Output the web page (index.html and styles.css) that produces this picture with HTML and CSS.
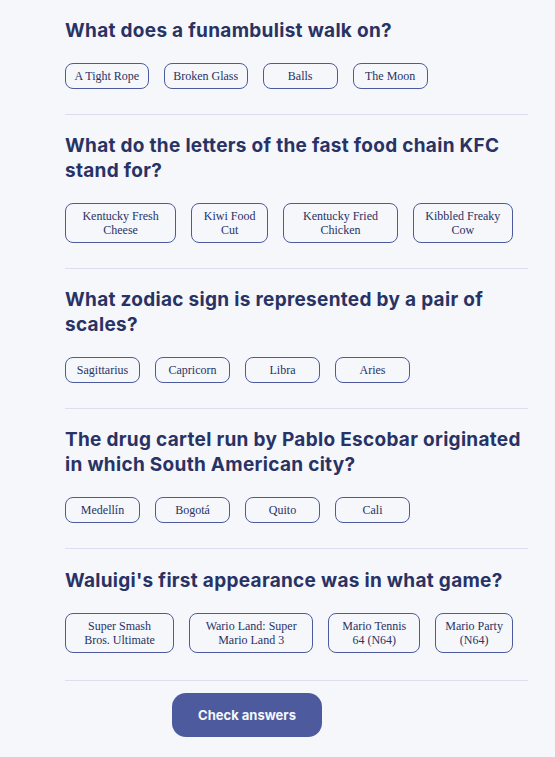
FILE: index.html
```html
<!DOCTYPE html>
<html lang="en">
<head>
<meta charset="utf-8">
<title>Quiz</title>
<link rel="stylesheet" href="styles.css">
</head>
<body>
<main class="quiz">
  <section class="question">
    <h2 class="question-title">What does a funambulist walk on?</h2>
    <div class="options">
      <button class="option">A Tight Rope</button>
      <button class="option">Broken Glass</button>
      <button class="option">Balls</button>
      <button class="option">The Moon</button>
    </div>
  </section>
  <section class="question">
    <h2 class="question-title">What do the letters of the fast food chain KFC stand for?</h2>
    <div class="options">
      <button class="option">Kentucky Fresh Cheese</button>
      <button class="option">Kiwi Food Cut</button>
      <button class="option">Kentucky Fried Chicken</button>
      <button class="option">Kibbled Freaky Cow</button>
    </div>
  </section>
  <section class="question">
    <h2 class="question-title">What zodiac sign is represented by a pair of scales?</h2>
    <div class="options">
      <button class="option">Sagittarius</button>
      <button class="option">Capricorn</button>
      <button class="option">Libra</button>
      <button class="option">Aries</button>
    </div>
  </section>
  <section class="question">
    <h2 class="question-title">The drug cartel run by Pablo Escobar originated in which South American city?</h2>
    <div class="options">
      <button class="option">Medellín</button>
      <button class="option">Bogotá</button>
      <button class="option">Quito</button>
      <button class="option">Cali</button>
    </div>
  </section>
  <section class="question">
    <h2 class="question-title">Waluigi's first appearance was in what game?</h2>
    <div class="options">
      <button class="option">Super Smash Bros. Ultimate</button>
      <button class="option">Wario Land: Super Mario Land 3</button>
      <button class="option">Mario Tennis 64 (N64)</button>
      <button class="option">Mario Party (N64)</button>
    </div>
  </section>
  <div class="actions">
    <button class="check-btn">Check answers</button>
  </div>
</main>
</body>
</html>
```

FILE: styles.css
```css
html, body {
  margin: 0;
  padding: 0;
  background: #f5f7fb;
}

body {
  color: #293264;
  font-family: Inter, "Noto Sans", sans-serif;
}

.quiz {
  width: 463px;
  margin-left: 65px;
}

.question {
  padding: 18px 0 25px;
  border-bottom: 1px solid #dbdef0;
}

.question + .question {
  padding-top: 18px;
}

.question:last-of-type {
  padding-top: 19px;
  padding-bottom: 27px;
}

.question-title {
  margin: 0 0 20px;
  font-size: 19px;
  line-height: 25px;
  font-weight: 700;
  letter-spacing: 0.3px;
  color: #293264;
}

.options {
  display: flex;
}

.option {
  font-family: "Liberation Serif", "Times New Roman", serif;
  font-size: 12px;
  line-height: 14px;
  color: #293264;
  background: transparent;
  border: 1px solid #4d5b9e;
  border-radius: 8px;
  padding: 5px 8.5px;
  min-width: 75px;
  margin: 0 15px 0 0;
  text-align: center;
}

.actions {
  padding-top: 12px;
}

.check-btn {
  margin-left: 107px;
  width: 150px;
  height: 44px;
  border: none;
  border-radius: 14px;
  background: #4d5b9e;
  color: #f5f7fb;
  font-family: Inter, "Noto Sans", sans-serif;
  font-size: 13px;
  font-weight: 700;
}
```
